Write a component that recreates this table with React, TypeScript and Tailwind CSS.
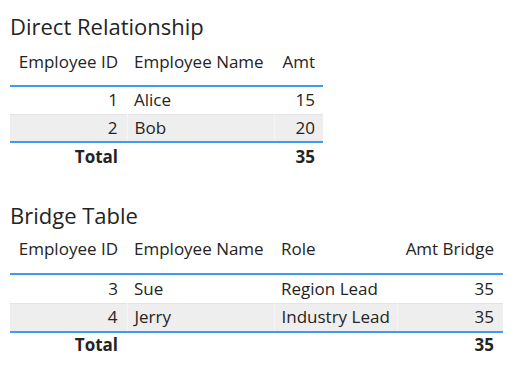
const direct = [
  { id: 1, name: "Alice", amt: 15 },
  { id: 2, name: "Bob", amt: 20 },
];

const bridge = [
  { id: 3, name: "Sue", role: "Region Lead", amt: 35 },
  { id: 4, name: "Jerry", role: "Industry Lead", amt: 35 },
];

const font = { fontFamily: '"Open Sans", "Segoe UI", sans-serif' };

function Title({ children }: { children: string }) {
  return <h2 className="text-[22px] leading-[28px] text-[#252423]">{children}</h2>;
}

export default function App() {
  return (
    <div className="w-[523px] h-[389px] bg-white pl-[10px] pt-[12px] text-[#252423]" style={font}>
      <Title>Direct Relationship</Title>
      <table className="mt-[10px] w-[313px] table-fixed border-collapse text-[17px] leading-[24px]">
        <thead>
          <tr className="border-b-2 border-[#3f9af0]">
            <th className="w-[117px] pr-[9px] pb-[11px] text-right font-normal">Employee ID</th>
            <th className="w-[147px] pl-[7px] pb-[11px] text-left font-normal">Employee Name</th>
            <th className="w-[49px] pr-[8px] pb-[11px] text-right font-normal">Amt</th>
          </tr>
        </thead>
        <tbody>
          {direct.map((r, i) => (
            <tr key={r.id} className={i % 2 ? "bg-[#eeeeee] border-t border-[#e4e4e4]" : ""}>
              <td className="h-[28px] pr-[9px] text-right">{r.id}</td>
              <td className={`pl-[7px] ${i % 2 ? "border-x border-[#f5f5f5]" : ""}`}>{r.name}</td>
              <td className="pr-[8px] text-right">{r.amt}</td>
            </tr>
          ))}
        </tbody>
        <tfoot>
          <tr className="border-t-2 border-[#3f9af0] font-bold">
            <td className="h-[28px] pr-[9px] text-right">Total</td>
            <td />
            <td className="pr-[8px] text-right">35</td>
          </tr>
        </tfoot>
      </table>

      <div className="mt-[31px]">
        <Title>Bridge Table</Title>
      </div>
      <table className="mt-[8px] w-[493px] table-fixed border-collapse text-[17px] leading-[24px]">
        <thead>
          <tr className="border-b-2 border-[#3f9af0]">
            <th className="w-[117px] pr-[9px] pb-[12px] text-right font-normal">Employee ID</th>
            <th className="w-[147px] pl-[7px] pb-[12px] text-left font-normal">Employee Name</th>
            <th className="w-[123px] pl-[7px] pb-[12px] text-left font-normal">Role</th>
            <th className="w-[106px] pr-[9px] pb-[12px] text-right font-normal">Amt Bridge</th>
          </tr>
        </thead>
        <tbody>
          {bridge.map((r, i) => (
            <tr key={r.id} className={i % 2 ? "bg-[#eeeeee] border-t border-[#e4e4e4]" : ""}>
              <td className="h-[29px] pr-[9px] text-right">{r.id}</td>
              <td className={`pl-[7px] ${i % 2 ? "border-x border-[#f5f5f5]" : ""}`}>{r.name}</td>
              <td className={`pl-[7px] ${i % 2 ? "border-r border-[#f5f5f5]" : ""}`}>{r.role}</td>
              <td className="pr-[9px] text-right">{r.amt}</td>
            </tr>
          ))}
        </tbody>
        <tfoot>
          <tr className="border-t-2 border-[#3f9af0] font-bold">
            <td className="h-[25px] pr-[9px] text-right">Total</td>
            <td />
            <td />
            <td className="pr-[9px] text-right">35</td>
          </tr>
        </tfoot>
      </table>
    </div>
  );
}
